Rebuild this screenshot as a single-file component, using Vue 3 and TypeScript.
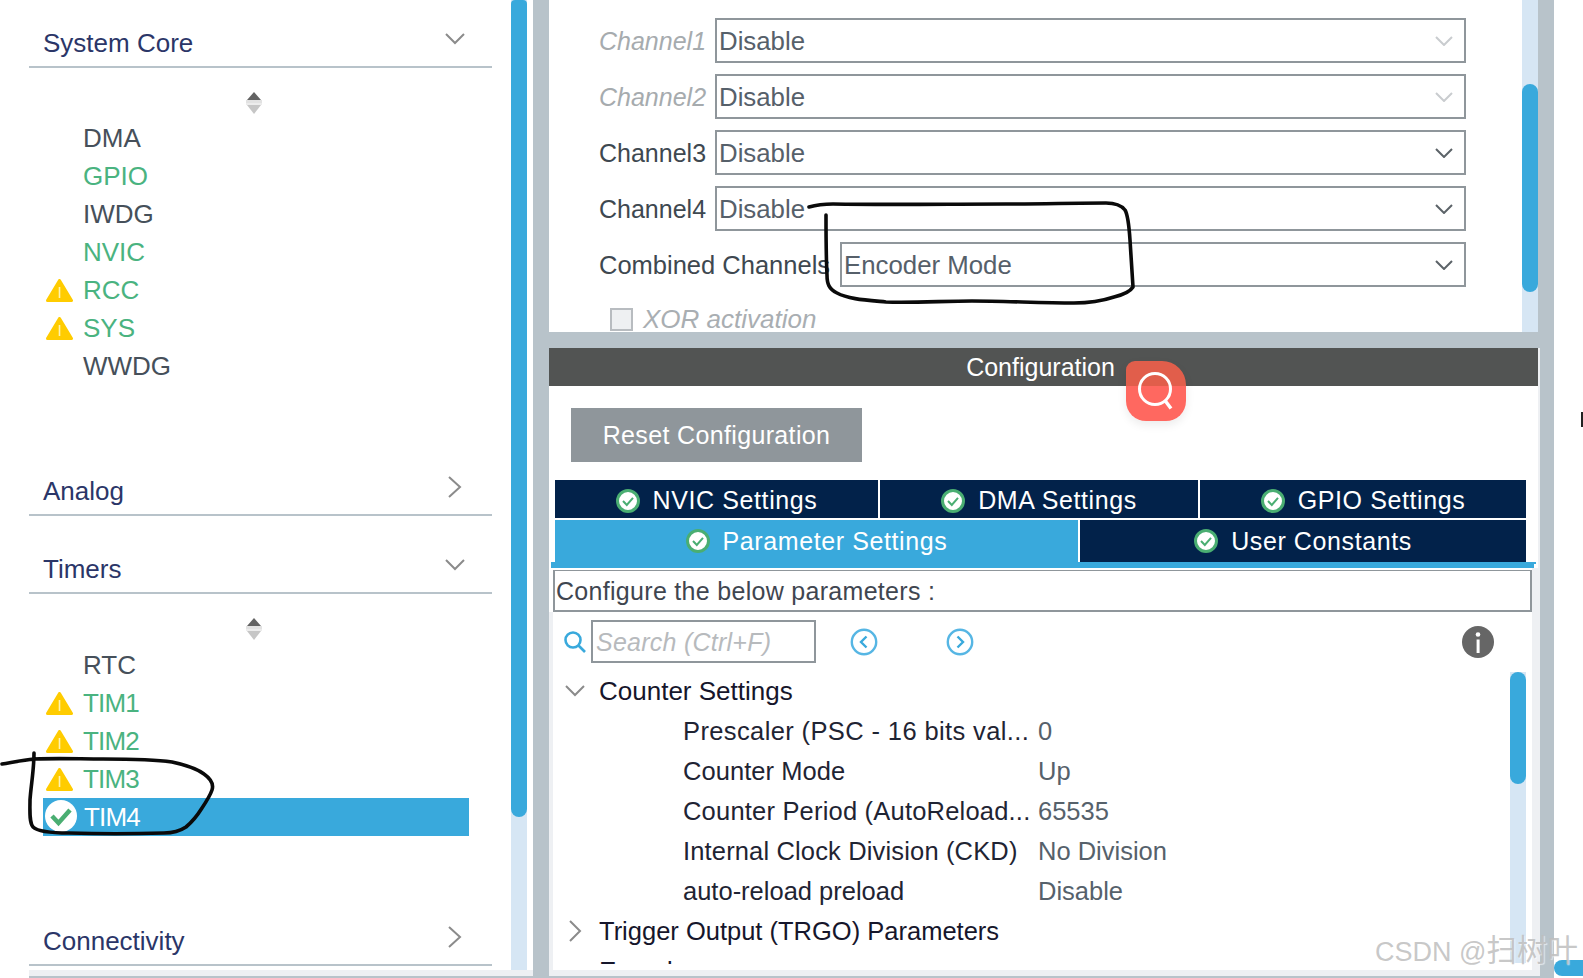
<script setup lang="ts">
interface Item { name: string; green?: boolean; warn?: boolean; ok?: boolean; tight?: boolean }
const coreItems: Item[] = [
  { name: 'DMA' },
  { name: 'GPIO', green: true },
  { name: 'IWDG' },
  { name: 'NVIC', green: true },
  { name: 'RCC', green: true, warn: true },
  { name: 'SYS', green: true, warn: true },
  { name: 'WWDG' },
]
const timerItems: Item[] = [
  { name: 'RTC' },
  { name: 'TIM1', green: true, warn: true, tight: true },
  { name: 'TIM2', green: true, warn: true, tight: true },
  { name: 'TIM3', green: true, warn: true, tight: true },
  { name: 'TIM4', ok: true, tight: true },
]
const channels = [
  { label: 'Channel1', off: true },
  { label: 'Channel2', off: true },
  { label: 'Channel3', off: false },
  { label: 'Channel4', off: false },
]
const params = [
  { name: 'Prescaler (PSC - 16 bits val...', value: '0', spacing: 0.38 },
  { name: 'Counter Mode', value: 'Up', spacing: 0.05 },
  { name: 'Counter Period (AutoReload...', value: '65535', spacing: 0.2 },
  { name: 'Internal Clock Division (CKD)', value: 'No Division', spacing: 0.15 },
  { name: 'auto-reload preload', value: 'Disable', spacing: 0 },
]
</script>

<template>
  <div class="app">
    <div class="side">
      <div class="side-row">
        <div class="side-list">
          <div class="head first">
            <span>System Core</span>
            <svg class="chev" width="20" height="12" viewBox="0 0 20 12"><path d="M1 1l9 9 9-9" /></svg>
          </div>
          <svg class="sort" width="18" height="22" viewBox="0 0 18 22">
            <path d="M9 0l7 8H2z" fill="#636363" />
            <rect x="1" y="8" width="16" height="3" fill="#e2e2e2" />
            <rect x="1" y="11" width="16" height="2" fill="#ececec" />
            <path d="M2 13h14l-7 9z" fill="#c6c6c6" />
          </svg>
          <ul class="items">
            <li v-for="it in coreItems" :key="it.name" class="item" :class="{ green: it.green }">
              <svg v-if="it.warn" class="warn" width="27" height="23" viewBox="0 0 27 23">
                <path d="M13.5 1.5L25.5 21.5H1.5z" fill="#ffcc00" stroke="#ffcc00" stroke-width="3" stroke-linejoin="round" />
                <rect x="12.7" y="8" width="1.6" height="11" fill="#fff3b0" />
              </svg>
              <span class="name">{{ it.name }}</span>
            </li>
          </ul>
          <div class="head analog">
            <span>Analog</span>
            <svg class="chev" width="20" height="22" viewBox="0 0 20 22"><path d="M4 1l11 10L4 21" /></svg>
          </div>
          <div class="head timers">
            <span>Timers</span>
            <svg class="chev" width="20" height="12" viewBox="0 0 20 12"><path d="M1 1l9 9 9-9" /></svg>
          </div>
          <svg class="sort sort2" width="18" height="22" viewBox="0 0 18 22">
            <path d="M9 0l7 8H2z" fill="#636363" />
            <rect x="1" y="8" width="16" height="3" fill="#e2e2e2" />
            <rect x="1" y="11" width="16" height="2" fill="#ececec" />
            <path d="M2 13h14l-7 9z" fill="#c6c6c6" />
          </svg>
          <ul class="items">
            <li v-for="it in timerItems" :key="it.name" class="item" :class="{ green: it.green, active: it.ok, tight: it.tight }">
              <svg v-if="it.warn" class="warn" width="27" height="23" viewBox="0 0 27 23">
                <path d="M13.5 1.5L25.5 21.5H1.5z" fill="#ffcc00" stroke="#ffcc00" stroke-width="3" stroke-linejoin="round" />
                <rect x="12.7" y="8" width="1.6" height="11" fill="#fff3b0" />
              </svg>
              <svg v-if="it.ok" class="okmark" width="32" height="32" viewBox="0 0 32 32">
                <circle cx="16" cy="16" r="16" fill="#fff" />
                <path d="M7 16l6.5 7L25 10" fill="none" stroke="#4aae72" stroke-width="4.5" />
              </svg>
              <span class="name">{{ it.name }}</span>
            </li>
          </ul>
          <div class="head conn">
            <span>Connectivity</span>
            <svg class="chev" width="20" height="22" viewBox="0 0 20 22"><path d="M4 1l11 10L4 21" /></svg>
          </div>
        </div>
        <div class="side-track"><div class="side-thumb"></div></div>
      </div>
      <div class="strip"></div>
    </div>

    <div class="gutter"></div>

    <div class="main">
      <div class="top">
        <div class="top-body">
          <div v-for="c in channels" :key="c.label" class="field" :class="{ off: c.off }">
            <label class="lab">{{ c.label }}</label>
            <div class="select">
              <span>Disable</span>
              <svg width="18" height="10" viewBox="0 0 18 10"><path d="M1 1l8 8 8-8" /></svg>
            </div>
          </div>
          <div class="field">
            <label class="lab wide">Combined Channels</label>
            <div class="select">
              <span>Encoder Mode</span>
              <svg width="18" height="10" viewBox="0 0 18 10"><path d="M1 1l8 8 8-8" /></svg>
            </div>
          </div>
          <div class="xor">
            <span class="box"></span>
            <span>XOR activation</span>
          </div>
        </div>
        <div class="top-track"><div class="top-thumb"></div></div>
      </div>

      <div class="config-bar">Configuration</div>

      <div class="panel">
        <button class="reset" type="button">Reset Configuration</button>
        <div class="tabs">
          <div class="tab-row r1">
            <div class="tab t1"><svg class="tick" width="24" height="24" viewBox="0 0 24 24"><circle cx="12" cy="12" r="10.5" fill="#fff" stroke="#4aae72" stroke-width="3" /><path d="M7 12l3.8 4L17 8.8" fill="none" stroke="#4aae72" stroke-width="2" /></svg>NVIC Settings</div>
            <div class="tab t2"><svg class="tick" width="24" height="24" viewBox="0 0 24 24"><circle cx="12" cy="12" r="10.5" fill="#fff" stroke="#4aae72" stroke-width="3" /><path d="M7 12l3.8 4L17 8.8" fill="none" stroke="#4aae72" stroke-width="2" /></svg>DMA Settings</div>
            <div class="tab t3"><svg class="tick" width="24" height="24" viewBox="0 0 24 24"><circle cx="12" cy="12" r="10.5" fill="#fff" stroke="#4aae72" stroke-width="3" /><path d="M7 12l3.8 4L17 8.8" fill="none" stroke="#4aae72" stroke-width="2" /></svg>GPIO Settings</div>
          </div>
          <div class="tab-row r2">
            <div class="tab t4 sel"><svg class="tick" width="24" height="24" viewBox="0 0 24 24"><circle cx="12" cy="12" r="10.5" fill="#fff" stroke="#4aae72" stroke-width="3" /><path d="M7 12l3.8 4L17 8.8" fill="none" stroke="#4aae72" stroke-width="2" /></svg>Parameter Settings</div>
            <div class="tab t5"><svg class="tick" width="24" height="24" viewBox="0 0 24 24"><circle cx="12" cy="12" r="10.5" fill="#fff" stroke="#4aae72" stroke-width="3" /><path d="M7 12l3.8 4L17 8.8" fill="none" stroke="#4aae72" stroke-width="2" /></svg>User Constants</div>
          </div>
        </div>
        <div class="tab-line"></div>

        <div class="lower">
          <div class="hint">Configure the below parameters :</div>
          <div class="params">
            <div class="search-row">
              <svg class="s-ico" width="24" height="24" viewBox="0 0 24 24"><circle cx="10" cy="10" r="7.5" fill="none" stroke="#39a9dc" stroke-width="2.6" /><path d="M15.5 15.5L22 22" stroke="#39a9dc" stroke-width="2.6" /></svg>
              <div class="search">Search (Ctrl+F)</div>
              <svg class="nav prev" width="28" height="28" viewBox="0 0 28 28"><circle cx="14" cy="14" r="12.2" fill="none" stroke="#56b6e4" stroke-width="2.4" /><path d="M16.5 8.5L11 14l5.5 5.5" fill="none" stroke="#39a9dc" stroke-width="2.4" /></svg>
              <svg class="nav next" width="28" height="28" viewBox="0 0 28 28"><circle cx="14" cy="14" r="12.2" fill="none" stroke="#56b6e4" stroke-width="2.4" /><path d="M11.5 8.5L17 14l-5.5 5.5" fill="none" stroke="#39a9dc" stroke-width="2.4" /></svg>
              <svg class="info" width="32" height="32" viewBox="0 0 32 32"><circle cx="16" cy="16" r="16" fill="#666" /><rect x="14.6" y="13.5" width="3" height="13.5" fill="#fff" /><circle cx="16" cy="8.5" r="2.3" fill="#fff" /></svg>
            </div>
            <div class="tree-wrap">
              <div class="tree">
                <div class="group">
                  <svg class="tw" width="20" height="12" viewBox="0 0 20 12"><path d="M1 1l9 9 9-9" /></svg>
                  <span>Counter Settings</span>
                </div>
                <div v-for="p in params" :key="p.name" class="param">
                  <span class="p-name" :style="{ letterSpacing: p.spacing + 'px' }">{{ p.name }}</span>
                  <span class="p-val">{{ p.value }}</span>
                </div>
                <div class="group trg">
                  <svg class="tw" width="20" height="22" viewBox="0 0 20 22"><path d="M5 1l10 10L5 21" /></svg>
                  <span>Trigger Output (TRGO) Parameters</span>
                </div>
                <div class="group">
                  <span class="tw-empty"></span>
                  <span>Encoder</span>
                </div>
              </div>
              <div class="tree-track"><div class="tree-thumb"></div></div>
            </div>
          </div>
        </div>
      </div>
      <div class="strip main-strip"></div>
    </div>

    <div class="rail"></div>
    <div class="edge">
      <div class="edge-mark"></div>
      <div class="edge-thumb"></div>
    </div>

    <div class="fab">
      <svg width="60" height="60" viewBox="0 0 60 60">
        <circle cx="29" cy="28" r="15.5" fill="none" stroke="#fff" stroke-width="3" />
        <path d="M39 39.5L45 47.5" stroke="#fff" stroke-width="3.4" />
      </svg>
    </div>

    <svg class="ink" width="1583" height="978" viewBox="0 0 1583 978">
      <path d="M2 764C14 762 24 760 34 759C60 758 80 759 103 759C130 759 152 759 172 762C186 765 196 768 204 774C211 779 214 784 212 790C210 796 206 802 202 808C197 816 192 822 186 827C180 831 172 833 164 833C130 834 100 834 69 833C52 833 38 832 33 827C29 822 30 810 30 800C31 785 34 770 34 753" />
      <path d="M809 207C816 205 824 204 833 204C890 205 950 204 1006 204C1040 204 1075 203 1106 203C1116 203 1121 205 1125 210C1128 215 1129 225 1130 240C1131 255 1132 270 1133 287C1130 292 1122 295 1114 297C1102 301 1087 303 1074 303C1040 303 1005 301 972 301C945 301 912 303 886 302C865 300 848 299 837 293C829 289 827 284 827 275C826 255 826 235 826 215" />
    </svg>

    <div class="mark">CSDN @<span class="cjk">扫树叶</span></div>
  </div>
</template>

<style>
html, body { margin: 0; background: #fff; overflow: hidden; }
</style>

<style scoped>
* { box-sizing: border-box; }
.app {
  position: relative;
  display: flex;
  width: 1583px;
  height: 978px;
  overflow: hidden;
  background: #fff;
  font-family: "Liberation Sans", Arial, sans-serif;
  font-size: 26px;
  color: #46505a;
}

/* left column */
.side { width: 533px; flex: none; display: flex; flex-direction: column; }
.side-row { height: 970px; display: flex; padding-left: 29px; padding-right: 6px; }
.side-list { width: 463px; flex: none; }
.side-track { width: 16px; margin-left: 19px; height: 970px; background: #d6e6f4; }
.side-thumb { height: 817px; background: #39a9dc; border-radius: 4px 4px 8px 8px; }
.strip { height: 8px; margin-left: 29px; background: #eef0f3; border-bottom: 2px solid #b8c3ca; }

.head {
  height: 52px;
  padding: 4px 27px 0 14px;
  display: flex;
  align-items: center;
  justify-content: space-between;
  border-bottom: 2px solid #b8c3ca;
  color: #2b3668;
}
.head .chev { fill: none; stroke: #8b8b8b; stroke-width: 2; margin-bottom: 9px; }
.head.first { margin-top: 16px; }
.analog { margin-top: 79px; }
.timers { margin-top: 26px; }
.conn { margin-top: 78px; }

.sort { display: block; margin: 24px 0 0 216px; }
.items { list-style: none; margin: 5px 0 0 14px; padding: 0; width: 426px; }
.sort2 + .items { margin-top: 6px; }
.item { height: 38px; display: flex; align-items: center; padding-left: 40px; position: relative; line-height: 38px; }
.item.green { color: #4ab380; }
.item.tight { letter-spacing: -0.8px; }
.item.active { background: #39a9dc; color: #fff; }
.warn { position: absolute; left: 3px; top: 8px; }
.okmark { position: absolute; left: 2px; top: 2px; }
.item.active .name { margin-left: 1px; }

.gutter { width: 16px; flex: none; background: #b8c3ca; }

/* main column */
.main { width: 991px; flex: none; display: flex; flex-direction: column; background: #b8c3ca; }
.top { height: 332px; width: 989px; flex: none; display: flex; background: #fff; margin-bottom: 16px; overflow: hidden; }
.top-body { width: 973px; flex: none; padding: 18px 0 0 50px; font-size: 25.8px; }
.top-track { width: 16px; flex: none; background: #d6e6f4; }
.top-thumb { margin-top: 84px; height: 208px; background: #39a9dc; border-radius: 8px; }
.field { display: flex; align-items: stretch; height: 45px; margin-bottom: 11px; }
.lab { width: 116px; flex: none; line-height: 46px; color: #3e4850; font-size: 25px; }
.lab.wide { width: 241px; font-size: 25.5px; white-space: nowrap; }
.select {
  width: 100%;
  margin-right: 56px;
  border: 2px solid #8f969b;
  display: flex;
  align-items: center;
  justify-content: space-between;
  padding: 2px 11px 0 2px;
  color: #56606a;
}
.select svg { fill: none; stroke: #5c6368; stroke-width: 2; margin-top: -2px; }
.field.off .lab { color: #a6abae; font-style: italic; }
.field.off .select svg { stroke: #c9cccf; }
.xor { display: flex; align-items: center; height: 23px; margin: 21px 0 0 11px; color: #a9aeb2; font-style: italic; font-size: 26px; }
.box { width: 23px; height: 23px; background: #eef0f2; border: 2px solid #b8bcc0; margin-right: 10px; flex: none; }

.config-bar {
  height: 38px;
  flex: none;
  background: #525453;
  border-right: 2px solid #eef0f3;
  color: #fff;
  text-align: center;
  line-height: 38px;
  font-size: 25px;
  padding-right: 6px;
}

.panel { height: 584px; flex: none; background: #fff; border-right: 2px solid #eef0f3; overflow: hidden; }
.reset {
  display: block;
  width: 291px;
  height: 54px;
  margin: 22px 0 0 22px;
  border: 0;
  padding: 0;
  background: #8f969b;
  color: #fff;
  font: inherit;
  font-size: 25px;
  letter-spacing: 0.35px;
}
.tabs { margin: 18px 0 0 6px; width: 971px; color: #fff; font-size: 25px; letter-spacing: 0.6px; }
.tab-row { display: flex; }
.r1 { height: 38px; margin-bottom: 2px; }
.r1 .tab { padding-top: 3px; }
.r2 { height: 42px; }
.tab { display: flex; align-items: center; justify-content: center; background: #02224a; }
.tick { margin-right: 13px; flex: none; }
.t1 { width: 323px; margin-right: 2px; }
.t2 { width: 318px; margin-right: 2px; }
.t3 { flex: 1; }
.t4 { width: 523px; margin-right: 2px; }
.t5 { flex: 1; }
.tab.sel { background: #39a9dc; }
.tab-line {
  height: 6px;
  margin: 0 2px;
  background:
    linear-gradient(#39a9dc, #39a9dc) 0 0 / 100% 2px no-repeat,
    linear-gradient(#39a9dc, #39a9dc) 0 0 / calc(100% - 2px) 100% no-repeat;
}
.lower { padding-top: 2px; border-right: 6px solid #eef0f3; }
.hint {
  height: 42px;
  margin-left: 4px;
  border: 2px solid #8f969b;
  border-top-width: 1px;
  line-height: 40px;
  font-size: 25px;
  letter-spacing: 0.3px;
  padding-left: 1px;
  color: #3f4650;
}

.params { height: 358px; border-left: 4px solid #eef0f3; background: #fff; }
.search-row { display: flex; align-items: center; height: 59px; padding: 8px 38px 8px 10px; }
.s-ico { flex: none; }
.search {
  width: 225px;
  height: 43px;
  margin-left: 4px;
  border: 2px solid #8f969b;
  font-style: italic;
  font-size: 25px;
  letter-spacing: 0.25px;
  line-height: 40px;
  padding-left: 3px;
  color: #b7babd;
  flex: none;
}
.nav { flex: none; }
.prev { margin-left: 34px; }
.next { margin-left: 68px; }
.info { margin-left: auto; }
.tree-wrap { display: flex; height: 292px; }
.tree { width: 957px; height: 293px; flex: none; overflow: hidden; color: #16162b; }
.tree-track { width: 16px; height: 291px; margin-top: 1px; background: #d6e6f4; flex: none; }
.tree-thumb { height: 112px; background: #39a9dc; border-radius: 8px; }
.group { height: 40px; display: flex; align-items: center; padding-left: 12px; white-space: nowrap; }
.group.trg { font-size: 25.5px; }
.tw { width: 20px; flex: none; margin-right: 14px; fill: none; stroke: #8b8b8b; stroke-width: 2; }
.tw-empty { width: 20px; flex: none; margin-right: 14px; }
.param { height: 40px; display: flex; align-items: center; padding-left: 130px; font-size: 25.5px; white-space: nowrap; }
.p-name { width: 355px; flex: none; color: #1f2433; }
.p-val { color: #56616b; }

.main-strip { margin: 0; flex: none; }
.rail { width: 14px; flex: none; background: #b8c3ca; }
.edge { flex: 1; display: flex; flex-direction: column; }
.edge-mark { width: 2px; height: 15px; margin: 412px 0 0 27px; background: #222; }
.edge-thumb { height: 16px; margin: auto 0 2px; background: #39a9dc; border-radius: 8px 0 0 8px; }

/* floating things */
.fab {
  position: absolute;
  left: 1126px;
  top: 361px;
  width: 60px;
  height: 60px;
  border-radius: 9px 24px 20px 20px;
  background: linear-gradient(#e15e4b 25px, #ff6860 25px);
  box-shadow: 0 4px 10px rgba(0, 0, 0, 0.08);
}
.fab svg { display: block; }
.ink { position: absolute; left: 0; top: 0; pointer-events: none; }
.ink path { fill: none; stroke: #0a0a0a; stroke-width: 3.6; stroke-linecap: round; stroke-linejoin: round; }
.mark {
  position: absolute;
  left: 1375px;
  top: 932px;
  font-family: "Liberation Sans", "Noto Sans CJK SC", sans-serif;
  font-size: 27px;
  line-height: 32px;
  color: rgba(190, 190, 190, 0.85);
  text-shadow: 1px 1px 1px rgba(255, 255, 255, 0.6);
  white-space: nowrap;
}
.cjk { font-family: "Noto Sans CJK SC", sans-serif; font-size: 30.5px; }
</style>
